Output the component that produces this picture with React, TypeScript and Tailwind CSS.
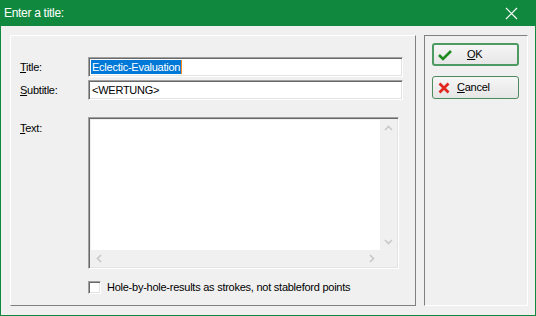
import React from 'react';

const font = { fontFamily: '"Liberation Sans", Arial, sans-serif' };

const sunken =
  'border border-t-[#a0a0a0] border-l-[#a0a0a0] border-b-white border-r-white shadow-[inset_1px_1px_0_#696969,inset_-1px_-1px_0_#e3e3e3]';

function Chevron({ dir }: { dir: 'up' | 'down' | 'left' | 'right' }) {
  const paths: Record<string, string> = {
    up: 'M1 6 L4.5 2.5 L8 6',
    down: 'M1 3 L4.5 6.5 L8 3',
    left: 'M6 1 L2.5 4.5 L6 8',
    right: 'M3 1 L6.5 4.5 L3 8',
  };
  return (
    <svg width="9" height="9" viewBox="0 0 9 9">
      <path d={paths[dir]} fill="none" stroke="#c8c8c8" strokeWidth="1.6" />
    </svg>
  );
}

function Field({ value, selected }: { value: string; selected?: boolean }) {
  return (
    <div className={`h-[20px] w-[315px] bg-white ${sunken} flex items-center pl-[2px]`}>
      {selected ? (
        <span className="flex items-center">
          <span className="bg-[#0078d7] text-white leading-[14px] px-px">{value}</span>
          <span className="w-px h-[14px] bg-[#ff8c1a]" />
        </span>
      ) : (
        <span className="text-black px-px">{value}</span>
      )}
    </div>
  );
}

function Button({ icon, label, first, def }: { icon: React.ReactNode; label: string; first: string; def?: boolean }) {
  return (
    <div
      className={`h-[23px] w-[87px] rounded-[3px] flex items-center bg-gradient-to-b from-[#f6f6f6] to-[#e6e6e6] ${
        def ? 'border-2 border-[#4d9a63]' : 'border border-[#4d8a5d]'
      }`}
    >
      <span className="w-[22px] flex justify-center shrink-0">{icon}</span>
      <span className={`text-black ${def ? 'ml-[11px]' : 'ml-[2px]'}`}>
        <span className="underline underline-offset-1">{first}</span>
        {label}
      </span>
    </div>
  );
}

export default function App() {
  return (
    <div className="w-[536px] h-[316px] flex flex-col bg-[#10893e] text-[11px] tracking-[-0.25px]" style={font}>
      <div className="h-[26px] shrink-0 flex items-center justify-between pl-[4px] pr-[18px]">
        <span className="text-white text-[12px] tracking-[-0.3px]">Enter a title:</span>
        <svg width="13" height="13" viewBox="0 0 13 13">
          <path d="M1 1 L12 12 M12 1 L1 12" stroke="white" strokeWidth="1.2" />
        </svg>
      </div>
      <div className="flex-1 mx-px mb-px bg-[#f0f0f0] flex gap-[8px] pl-[9px] pr-[7px] pt-[9px] pb-[9px]">
        <div className="w-[406px] border border-t-white border-l-white border-r-[#808080] border-b-[#808080] flex flex-col pl-[9px] pt-[21px]">
          <div className="flex items-center h-[20px]">
            <span className="w-[68px]">
              <span className="underline">T</span>itle:
            </span>
            <Field value="Eclectic-Evaluation" selected />
          </div>
          <div className="flex items-center h-[20px] mt-[3px]">
            <span className="w-[68px]">
              <span className="underline">S</span>ubtitle:
            </span>
            <Field value="<WERTUNG>" />
          </div>
          <div className="flex items-start mt-[17px]">
            <span className="w-[68px] mt-[3px]">
              <span className="underline">T</span>ext:
            </span>
            <div className={`w-[311px] h-[152px] ${sunken} bg-[#f0f0f0] p-[2px] flex flex-col`}>
              <div className="flex flex-1">
                <div className="flex-1 bg-white" />
                <div className="w-[16px] flex flex-col justify-between items-center py-[4px]">
                  <Chevron dir="up" />
                  <Chevron dir="down" />
                </div>
              </div>
              <div className="h-[16px] flex items-center justify-between pl-[4px] pr-[20px]">
                <Chevron dir="left" />
                <Chevron dir="right" />
              </div>
            </div>
          </div>
          <div className="flex items-center mt-[10px]">
            <span className="w-[13px] h-[13px] bg-white border border-t-[#a0a0a0] border-l-[#a0a0a0] border-b-white border-r-white shadow-[inset_1px_1px_0_#696969,inset_-1px_-1px_0_#e3e3e3] ml-[68px]" />
            <span className="ml-[6px]">Hole-by-hole-results as strokes, not stableford points</span>
          </div>
        </div>
        <div className="w-[104px] border border-t-[#808080] border-l-[#808080] border-r-white border-b-white flex flex-col items-start pl-[7px] pt-[7px] gap-[10px]">
          <Button
            def
            first="O"
            label="K"
            icon={
              <svg width="14" height="12" viewBox="0 0 14 12">
                <path d="M1 6 L5 10 L13 2" fill="none" stroke="#1f8a1f" strokeWidth="2.6" />
              </svg>
            }
          />
          <Button
            first="C"
            label="ancel"
            icon={
              <svg width="12" height="12" viewBox="0 0 12 12">
                <path d="M1.5 1.5 L10.5 10.5 M10.5 1.5 L1.5 10.5" stroke="#e0281e" strokeWidth="2.8" />
              </svg>
            }
          />
        </div>
      </div>
    </div>
  );
}
